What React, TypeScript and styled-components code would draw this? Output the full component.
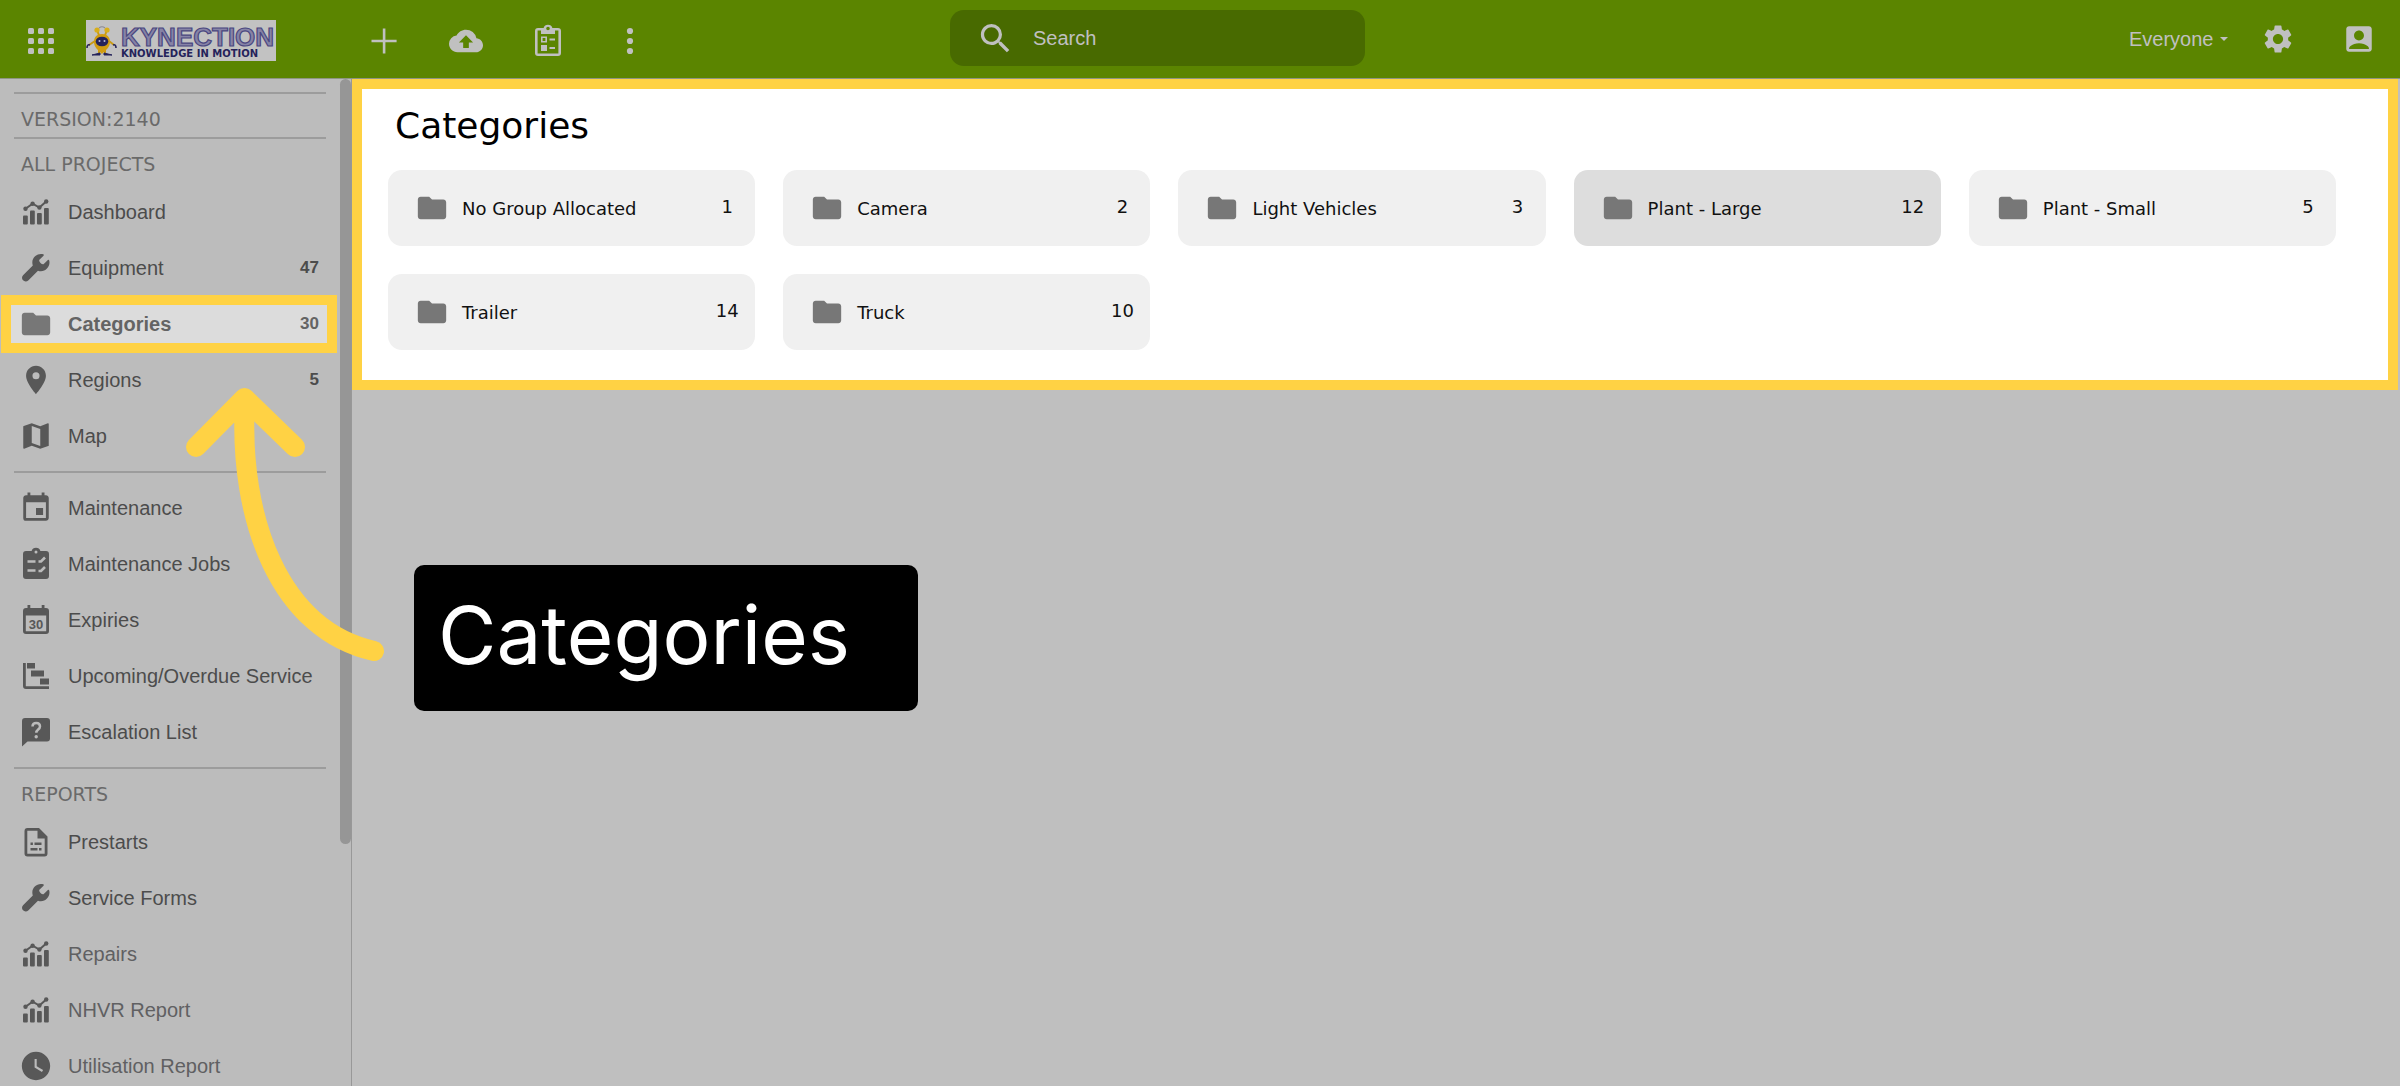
import React from "react";
import styled, { createGlobalStyle } from "styled-components";
import {
  MdAccountBox,
  MdBackup,
  MdEvent,
  MdFolder,
  MdLocationOn,
  MdMap,
  MdSearch,
  MdSettings,
  MdWatchLater,
} from "react-icons/md";

const color = {
  header: "#5b8500",
  headerIcon: "#c0c0c0",
  search: "#486a00",
  sidebar: "#bcbcbc",
  page: "#bfbfbf",
  rule: "#9c9c9c",
  yellow: "#ffd244",
  icon: "#585858",
  text: "#4c4c4c",
  muted: "#6a6a6a",
  folder: "#777777",
};

const sans = `"Liberation Sans", Arial, sans-serif`;
const wide = `"DejaVu Sans", Verdana, sans-serif`;

const GlobalStyle = createGlobalStyle`
  * { box-sizing: border-box; }
  body { margin: 0; background: ${color.page}; font-family: ${sans}; overflow: hidden; }
`;

const Page = styled.div`
  height: 100vh;
  display: flex;
  flex-direction: column;
`;

/* ---------- header ---------- */

const Header = styled.header`
  flex: none;
  height: 79px;
  display: grid;
  grid-template-columns: 950fr 415fr 1035fr;
  background: ${color.header};
  border-bottom: 1px solid #8f9684;
`;

const HeaderLeft = styled.div`
  display: flex;
  align-items: center;
  padding: 3px 0 0 24px;
`;

const Tools = styled.div`
  display: flex;
  align-items: center;
  gap: 48px;
  margin-left: 91px;
`;

const IconButton = styled.button`
  display: flex;
  align-items: center;
  justify-content: center;
  width: 34px;
  height: 34px;
  padding: 0;
  border: 0;
  background: none;
  color: ${color.headerIcon};
`;

const LogoLink = styled.a`
  display: block;
  width: 190px;
  height: 41px;
  margin-left: 28px;
  background: #c2c2c2;
`;

const SearchBox = styled.label`
  display: flex;
  align-items: center;
  height: 56px;
  margin-top: 10px;
  padding: 0 24px 0 26px;
  gap: 18px;
  border-radius: 14px;
  background: ${color.search};
  color: ${color.headerIcon};
`;

const SearchInput = styled.input`
  flex: 1;
  min-width: 0;
  padding: 0;
  border: 0;
  outline: 0;
  background: none;
  font: 20px/28px ${sans};
  color: ${color.headerIcon};
  &::placeholder {
    color: ${color.headerIcon};
    opacity: 1;
  }
`;

const HeaderRight = styled.div`
  display: flex;
  align-items: center;
  justify-content: flex-end;
  padding-right: 24px;
`;

const Audience = styled.label`
  display: flex;
  align-items: center;
  gap: 6px;
  color: ${color.headerIcon};
`;

const AudienceSelect = styled.select`
  appearance: none;
  padding: 0;
  border: 0;
  background: none;
  font: 20px/28px ${sans};
  color: ${color.headerIcon};
`;

const Account = styled.div`
  display: flex;
  gap: 47px;
  margin-left: 33px;
`;

/* ---------- sidebar ---------- */

const Body = styled.div`
  flex: 1;
  min-height: 0;
  display: flex;
`;

const Sidebar = styled.aside`
  flex: none;
  width: 352px;
  display: flex;
  overflow: hidden;
  background: ${color.sidebar};
  border-right: 1px solid #989898;
`;

const Nav = styled.nav`
  flex: 1;
  padding-top: 13px;
`;

const Scrollbar = styled.div`
  width: 11px;
`;

const Thumb = styled.div`
  height: 76%;
  border-radius: 6px;
  background: #969696;
`;

const Rule = styled.hr`
  height: 2px;
  margin: 0 14px;
  border: 0;
  background: ${color.rule};
`;

const SectionTitle = styled.h2`
  margin: 0;
  padding: 8px 0 0 21px;
  font: 19px/35px ${wide};
  color: ${color.muted};
`;

const List = styled.ul<{ $top?: number }>`
  margin: 0;
  padding: ${(p) => p.$top ?? 2}px 4px 7px 2px;
  list-style: none;
`;

const ItemLink = styled.a<{ $active?: boolean; $faded?: boolean }>`
  display: flex;
  align-items: center;
  height: 56px;
  padding: 0 17px;
  font-size: 20px;
  font-weight: ${(p) => (p.$active ? 700 : 400)};
  color: ${(p) => (p.$active ? "#646464" : p.$faded ? "#606062" : color.text)};
  text-decoration: none;
  background: ${(p) => (p.$active ? "#dcdcdc" : "transparent")};
  outline: ${(p) => (p.$active ? `10px solid ${color.yellow}` : "none")};
  outline-offset: -9px;

  svg {
    flex: none;
    color: ${(p) => (p.$active ? color.folder : color.icon)};
  }
`;

const ItemLabel = styled.span`
  flex: 1;
  margin-left: 15px;
  white-space: nowrap;
`;

const ItemCount = styled.span`
  font-size: 17px;
  font-weight: 700;
`;

/* ---------- content ---------- */

const Main = styled.main`
  flex: 1;
  min-width: 0;
  padding-right: 2px;
`;

const Panel = styled.section`
  padding: 15px 52px 30px 26px;
  border: 10px solid ${color.yellow};
  background: #ffffff;
`;

const PanelTitle = styled.h1`
  margin: 0 0 22px;
  padding-left: 7px;
  font: 36px/44px ${wide};
  color: #000000;
`;

const CardGrid = styled.div`
  display: grid;
  grid-template-columns: repeat(5, 1fr);
  gap: 28px;
`;

const Card = styled.a<{ $hover?: boolean }>`
  display: flex;
  align-items: center;
  height: 76px;
  padding: 0 13px 0 27px;
  border-radius: 14px;
  background: ${(p) => (p.$hover ? "#dddddd" : "#f0f0f0")};
  font: 18px/24px ${wide};
  color: #111111;
  text-decoration: none;

  svg {
    flex: none;
    color: ${color.folder};
  }
`;

const CardLabel = styled.span`
  flex: 1;
  margin-left: 13px;
  padding-top: 2px;
`;

const CardCount = styled.span`
  width: 30px;
  padding-bottom: 2px;
  text-align: center;
`;

/* ---------- annotation ---------- */

const ArrowLayer = styled.svg`
  position: absolute;
  left: 180px;
  top: 380px;
  pointer-events: none;
`;

const Callout = styled.div`
  position: absolute;
  left: 414px;
  top: 565px;
  width: 504px;
  padding: 18px 24px 24px;
  border-radius: 10px;
  background: #000000;
  color: #ffffff;
  font: 80px/104px Inter, sans-serif;
`;

/* ---------- icons ---------- */

const Svg = ({ box = 34, children }: { box?: number; children: React.ReactNode }) => (
  <svg width="34" height="34" viewBox={`0 0 ${box} ${box}`} fill="currentColor" aria-hidden="true">
    {children}
  </svg>
);

const AppsIcon = () => (
  <Svg>
    {[4, 14, 24].map((y) =>
      [4, 14, 24].map((x) => <rect key={`${x}-${y}`} x={x} y={y} width="6" height="6" rx="1.6" />)
    )}
  </Svg>
);

const PlusIcon = () => (
  <Svg>
    <path d="M15.8 4.5h2.6v11.2h11.2v2.6H18.4v11.2h-2.6V18.3H4.500v-2.600h11.300z" />
  </Svg>
);

const ClipboardListIcon = () => (
  <Svg>
    <path
      fillRule="evenodd"
      d="M7 4h5.600a4.600 4.600 0 0 1 8.800 0H27a3 3 0 0 1 3 3v22a3 3 0 0 1-3 3H7a3 3 0 0 1-3-3V7a3 3 0 0 1 3-3zm-.4 2.600V29.400h20.800V6.600h-3.400v3.400H10V6.600zM17 2.700a1.800 1.800 0 1 0 0 3.600 1.800 1.800 0 0 0 0-3.600zM10 12.500h6v6h-6zm1.600 1.600v2.800h2.800v-2.800zM10 21h6v6h-6zM18.500 14.500H24v2h-5.500zM18.500 23H24v2h-5.500z"
    />
  </Svg>
);

const MoreIcon = () => (
  <Svg>
    <circle cx="17" cy="7" r="3.1" />
    <circle cx="17" cy="17" r="3.1" />
    <circle cx="17" cy="27" r="3.1" />
  </Svg>
);

const TrendIcon = () => (
  <Svg>
    <rect x="4" y="20.500" width="4.800" height="9" rx="1" />
    <rect x="11" y="15.500" width="4.800" height="14" rx="1" />
    <rect x="18" y="18" width="4.800" height="11.500" rx="1" />
    <rect x="25" y="13" width="4.800" height="16.500" rx="1" />
    <path d="M6.500 13.800 13.600 8.700 20.400 12.500 27.200 6.500" fill="none" stroke="currentColor" strokeWidth="2" />
    <circle cx="6.500" cy="13.800" r="2.200" />
    <circle cx="13.600" cy="8.700" r="2.200" />
    <circle cx="20.400" cy="12.500" r="2.200" />
    <circle cx="27.200" cy="6.500" r="2.200" />
  </Svg>
);

const WrenchIcon = () => (
  <Svg>
    <path
      transform="translate(3 3) scale(.0537)"
      d="M352 320c88.400 0 160-71.600 160-160c0-15.300-2.200-30.100-6.200-44.200c-3.100-10.800-16.400-13.200-24.300-5.300l-76.800 76.800c-3 3-7.100 4.700-11.300 4.700c-30 0-74-30-74-74c0-4.200 1.700-8.300 4.700-11.300l77.400-76.200c7.900-7.900 5.400-21.200-5.300-24.300C382.100 2.200 367.300 0 352 0C263.600 0 192 71.600 192 160c0 19.100 3.400 37.500 9.500 54.500L19.900 396.100C7.200 408.800 0 426.100 0 444.100C0 481.600 30.400 512 67.900 512c18 0 35.300-7.200 48-19.900L297.500 310.500c17 6.200 35.400 9.500 54.500 9.500z"
    />
  </Svg>
);

const JobsIcon = () => (
  <Svg>
    <path d="M7 4h5.600a4.600 4.600 0 0 1 8.800 0H27a3 3 0 0 1 3 3v22a3 3 0 0 1-3 3H7a3 3 0 0 1-3-3V7a3 3 0 0 1 3-3z" />
    <circle cx="17" cy="5" r="1.500" fill={color.sidebar} />
    <path
      d="M8.500 14.500h8M8.500 23.500h8M19.500 14.500h2.500l4-4M19.500 24h2.500l4-4"
      fill="none"
      stroke={color.sidebar}
      strokeWidth="2.600"
    />
  </Svg>
);

const Calendar30Icon = () => (
  <Svg>
    <path
      fillRule="evenodd"
      d="M8.500 2h2.800v3h11.400V2h2.800v3H27a3 3 0 0 1 3 3v20a3 3 0 0 1-3 3H7a3 3 0 0 1-3-3V8a3 3 0 0 1 3-3h1.500zM6.800 12.500v15.700h20.400V12.500z"
    />
    <text x="17" y="25.500" textAnchor="middle" fontFamily="Liberation Sans, sans-serif" fontWeight="700" fontSize="13">
      30
    </text>
  </Svg>
);

const GanttIcon = () => (
  <Svg>
    <path d="M4 4h2.800v23.200H30V30H7a3 3 0 0 1-3-3z" />
    <rect x="8" y="4" width="8" height="5.500" />
    <rect x="12" y="11.500" width="13" height="6" />
    <rect x="21" y="19.500" width="9" height="6" />
  </Svg>
);

const QuestionIcon = () => (
  <Svg>
    <path d="M6 3h22a3 3 0 0 1 3 3v17.500a3 3 0 0 1-3 3H8.500L3 31.500V6a3 3 0 0 1 3-3z" />
    <path
      d="M13.500 11.500c0-4.700 7.500-4.700 7.500 0 0 3-3.700 3-3.700 6.200"
      fill="none"
      stroke={color.sidebar}
      strokeWidth="2.500"
    />
    <circle cx="17.200" cy="21.800" r="1.700" fill={color.sidebar} />
  </Svg>
);

const FormIcon = () => (
  <Svg>
    <path
      fillRule="evenodd"
      d="M8.500 3H20l8.500 8.500V28.500a3 3 0 0 1-3 3h-17a3 3 0 0 1-3-3V6a3 3 0 0 1 3-3zM8.300 5.800v22.900h17.400V13.500H18.500V5.800zM11.500 17.500h2.400v2.400h-2.400zM15.500 17.500h7v2.400h-7zM11.500 23h7v2.400h-7zM20 23h2.500v2.400H20z"
    />
  </Svg>
);

const Logo = () => (
  <svg width="190" height="41" viewBox="0 0 190 41" role="img" aria-label="Kynection">
    <g stroke="#c99a12" strokeWidth="2" fill="none">
      <path d="M14 18 11 10M18 18 21 10" />
      <path d="M9 21 3 25M23 21 28 25" />
      <path d="M13 29v6M19 29v6" />
    </g>
    <circle cx="11" cy="10" r="2.600" fill="#d8ae1c" />
    <circle cx="21" cy="10" r="2.600" fill="#d8ae1c" />
    <path d="M13 8q3-2.500 6 0" stroke="#8a8a94" strokeWidth="1.200" fill="none" />
    <path d="M16 14c6 0 8 4 8 8 0 5-4 8-8 12-4-4-8-7-8-12 0-4 2-8 8-8z" fill="#d19d10" />
    <ellipse cx="16" cy="21.500" rx="6.300" ry="4.800" fill="#25235a" />
    <circle cx="13.500" cy="21" r="1" fill="#b9b9d8" />
    <circle cx="18.500" cy="21" r="1" fill="#b9b9d8" />
    <path d="M1 28q0-4 3-3M30 28q0-4-3-3" stroke="#25235a" strokeWidth="1.600" fill="none" />
    <path d="M6 35h8v-2zM18 33v2h8z" fill="#25235a" stroke="#25235a" />
    <text
      x="35"
      y="26"
      fontFamily="Liberation Sans, sans-serif"
      fontWeight="700"
      fontSize="26"
      fill="#8683a6"
      stroke="#4a4780"
      strokeWidth="1.200"
    >
      KYNECTION
    </text>
    <text x="35" y="37" fontFamily="DejaVu Sans, sans-serif" fontWeight="700" fontSize="10" fill="#25235a">
      KNOWLEDGE IN MOTION
    </text>
  </svg>
);

/* ---------- data ---------- */

type Item = { label: string; icon: React.ReactNode; count?: number; active?: boolean; faded?: boolean };

const projects: Item[] = [
  { label: "Dashboard", icon: <TrendIcon /> },
  { label: "Equipment", icon: <WrenchIcon />, count: 47 },
  { label: "Categories", icon: <MdFolder size={34} />, count: 30, active: true },
  { label: "Regions", icon: <MdLocationOn size={34} />, count: 5 },
  { label: "Map", icon: <MdMap size={34} /> },
];

const upkeep: Item[] = [
  { label: "Maintenance", icon: <MdEvent size={34} /> },
  { label: "Maintenance Jobs", icon: <JobsIcon /> },
  { label: "Expiries", icon: <Calendar30Icon /> },
  { label: "Upcoming/Overdue Service", icon: <GanttIcon /> },
  { label: "Escalation List", icon: <QuestionIcon /> },
];

const reports: Item[] = [
  { label: "Prestarts", icon: <FormIcon /> },
  { label: "Service Forms", icon: <WrenchIcon /> },
  { label: "Repairs", icon: <TrendIcon />, faded: true },
  { label: "NHVR Report", icon: <TrendIcon />, faded: true },
  { label: "Utilisation Report", icon: <MdWatchLater size={34} />, faded: true },
];

const categories = [
  { name: "No Group Allocated", count: 1 },
  { name: "Camera", count: 2 },
  { name: "Light Vehicles", count: 3 },
  { name: "Plant - Large", count: 12, hover: true },
  { name: "Plant - Small", count: 5 },
  { name: "Trailer", count: 14 },
  { name: "Truck", count: 10 },
];

const NavList = ({ items, top }: { items: Item[]; top?: number }) => (
  <List $top={top}>
    {items.map((item) => (
      <li key={item.label}>
        <ItemLink href="#" $active={item.active} $faded={item.faded}>
          {item.icon}
          <ItemLabel>{item.label}</ItemLabel>
          {item.count !== undefined && <ItemCount>{item.count}</ItemCount>}
        </ItemLink>
      </li>
    ))}
  </List>
);

export default function App() {
  return (
    <Page>
      <GlobalStyle />
      <Header>
        <HeaderLeft>
          <IconButton aria-label="Apps">
            <AppsIcon />
          </IconButton>
          <LogoLink href="#">
            <Logo />
          </LogoLink>
          <Tools>
            <IconButton aria-label="Add">
              <PlusIcon />
            </IconButton>
            <IconButton aria-label="Upload">
              <MdBackup size={34} />
            </IconButton>
            <IconButton aria-label="Forms">
              <ClipboardListIcon />
            </IconButton>
            <IconButton aria-label="More">
              <MoreIcon />
            </IconButton>
          </Tools>
        </HeaderLeft>
        <SearchBox>
          <MdSearch size={39} />
          <SearchInput type="search" placeholder="Search" aria-label="Search" />
        </SearchBox>
        <HeaderRight>
          <Audience>
            <AudienceSelect aria-label="Audience">
              <option>Everyone</option>
            </AudienceSelect>
            <svg width="8" height="4" viewBox="0 0 8 4" fill="currentColor" aria-hidden="true">
              <path d="M0 0h8L4 4z" />
            </svg>
          </Audience>
          <Account>
            <IconButton aria-label="Settings">
              <MdSettings size={34} />
            </IconButton>
            <IconButton aria-label="Account">
              <MdAccountBox size={34} />
            </IconButton>
          </Account>
        </HeaderRight>
      </Header>
      <Body>
        <Sidebar>
          <Nav>
            <Rule />
            <SectionTitle>VERSION:2140</SectionTitle>
            <Rule />
            <SectionTitle>ALL PROJECTS</SectionTitle>
            <NavList items={projects} />
            <Rule />
            <NavList items={upkeep} top={7} />
            <Rule />
            <SectionTitle>REPORTS</SectionTitle>
            <NavList items={reports} />
          </Nav>
          <Scrollbar>
            <Thumb />
          </Scrollbar>
        </Sidebar>
        <Main>
          <Panel>
            <PanelTitle>Categories</PanelTitle>
            <CardGrid>
              {categories.map((c) => (
                <Card key={c.name} href="#" $hover={c.hover}>
                  <MdFolder size={34} />
                  <CardLabel>{c.name}</CardLabel>
                  <CardCount>{c.count}</CardCount>
                </Card>
              ))}
            </CardGrid>
          </Panel>
        </Main>
      </Body>
      <ArrowLayer width="220" height="290" viewBox="180 380 220 290" fill="none" aria-hidden="true">
        <path
          d="M196 447 244.500 398 295 447M245 400C238 520 280 630 374 651"
          stroke={color.yellow}
          strokeWidth="20"
          strokeLinecap="round"
          strokeLinejoin="round"
        />
      </ArrowLayer>
      <Callout>Categories</Callout>
    </Page>
  );
}
